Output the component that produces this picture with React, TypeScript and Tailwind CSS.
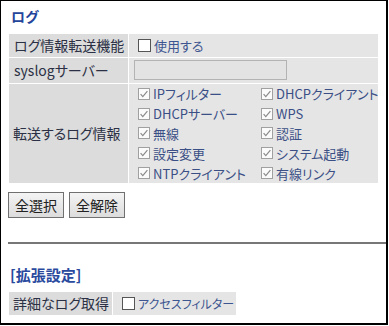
import React from "react";

function Box({ checked }: { checked?: boolean }) {
  if (checked)
    return (
      <svg width="12" height="12" viewBox="0 0 12 12" className="shrink-0">
        <rect x="0.5" y="0.5" width="11" height="11" fill="#fbfbfb" stroke="#a0a0a0" />
        <path d="M2.6 6.2 L4.8 8.6 L9.4 3.2" fill="none" stroke="#8a8a8a" strokeWidth="1.2" />
      </svg>
    );
  return <span className="w-[13px] h-[13px] border border-[#555] bg-white shrink-0" />;
}

const items = [
  ["IPフィルター", "DHCPクライアント"],
  ["DHCPサーバー", "WPS"],
  ["無線", "認証"],
  ["設定変更", "システム起動"],
  ["NTPクライアント", "有線リンク"],
];

export default function App() {
  return (
    <div className="w-[388px] h-[325px] border-l border-t border-r-2 border-b-2 border-black bg-white overflow-hidden [font-family:'Noto_Sans_CJK_JP',sans-serif] [font-feature-settings:'palt']">
      <div className="pt-[5px] pl-[10px] text-[14px] leading-[20px] font-bold text-[#23449a]">ログ</div>

      <div className="mt-[8px] ml-[8px] grid grid-cols-[119px_249px] grid-rows-[23px_25px_99px] gap-x-[1px] gap-y-[1px]">
        <div className="bg-[#dcdcdc] pl-[5px] flex items-center text-[14px] text-[#2b3044]">ログ情報転送機能</div>
        <div className="bg-[#e5e5e5] pl-[9px] flex items-center gap-[3px] text-[13px] text-[#3d5590]">
          <Box />
          <span>使用する</span>
        </div>

        <div className="bg-[#dcdcdc] pl-[5px] flex items-center text-[14px] text-[#2b3044]">syslogサーバー</div>
        <div className="bg-[#e5e5e5] pl-[5px] pt-[2px]">
          <div className="w-[153px] h-[20px] border border-[#b3b3b3] bg-[#e3e3e3]" />
        </div>

        <div className="bg-[#dcdcdc] pl-[4px] flex items-center text-[14px] text-[#2b3044]">転送するログ情報</div>
        <div className="bg-[#e5e5e5] pl-[9px] grid grid-cols-[123px_auto] auto-rows-[19.8px] text-[13px] text-[#3a4f85]">
          {items.flat().map((t) => (
            <div key={t} className="flex items-center gap-[3px] whitespace-nowrap">
              <Box checked />
              <span className="leading-none">{t}</span>
            </div>
          ))}
        </div>
      </div>

      <div className="mt-[9px] ml-[7px] flex gap-[5px]">
        {["全選択", "全解除"].map((b) => (
          <button
            key={b}
            className="w-[56px] h-[26px] border border-[#707070] bg-gradient-to-b from-[#f4f4f4] to-[#dcdcdc] text-[14px] text-[#222]"
          >
            {b}
          </button>
        ))}
      </div>

      <div className="mt-[24px] ml-[7px] h-[2px] bg-[#777]" />

      <div className="mt-[21px] pl-[9px] text-[15px] leading-[20px] font-bold text-[#2a4a9e]">[拡張設定]</div>

      <div className="mt-[7px] ml-[8px] grid grid-cols-[103px_123px] h-[23px] gap-x-[1px]">
        <div className="bg-[#dcdcdc] pl-[4px] flex items-center text-[14px] text-[#2b3044]">詳細なログ取得</div>
        <div className="bg-[#e5e5e5] pl-[9px] flex items-center gap-[3px] text-[12px] text-[#3d5590] whitespace-nowrap">
          <Box />
          <span>アクセスフィルター</span>
        </div>
      </div>
    </div>
  );
}
